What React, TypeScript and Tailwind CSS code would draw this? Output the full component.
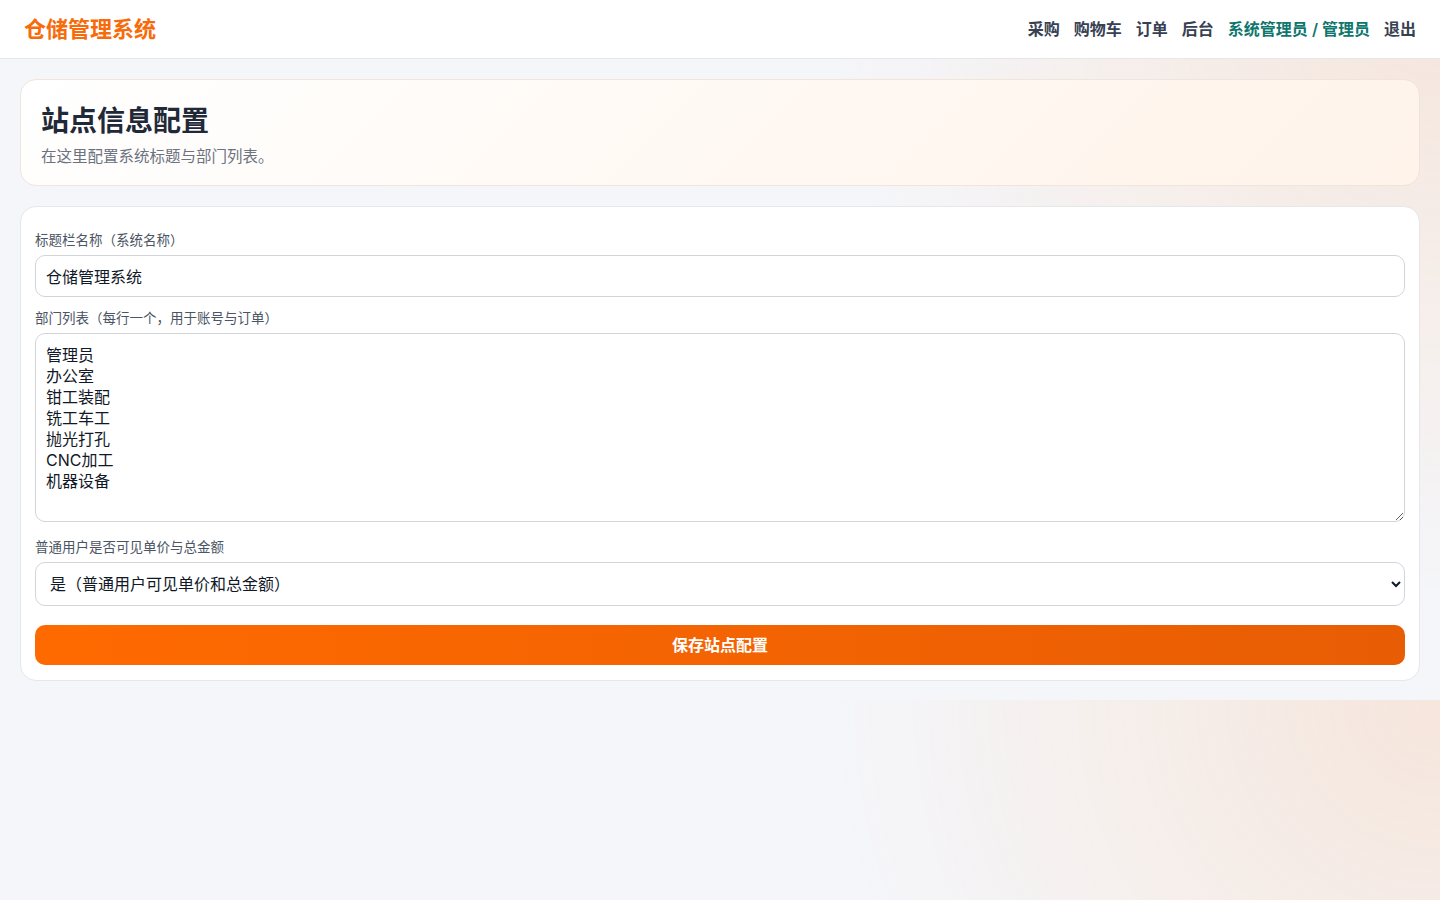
import React from 'react';

const departments = ['管理员', '办公室', '钳工装配', '铣工车工', '抛光打孔', 'CNC加工', '机器设备'];

const navLinks = ['采购', '购物车', '订单', '后台'];

const App: React.FC = () => {
  return (
    <div
      className="min-h-screen bg-[#f5f6fa] bg-[radial-gradient(circle_at_100%_0%,rgba(251,146,60,0.16),rgba(251,146,60,0)_38%)] bg-[length:100%_700px] bg-repeat-y font-['Inter','Noto_Sans_CJK_SC',sans-serif] text-[#111827]"
    >
      <header className="h-[59px] bg-white border-b border-[#e5e7eb] flex items-center justify-between px-6">
        <h1 className="text-[22px] font-bold text-[#f76b0b]">仓储管理系统</h1>
        <nav className="flex items-center gap-[14px] text-[16px] font-semibold text-[#374151]">
          {navLinks.map((l) => (
            <a key={l} href="#" className="hover:text-[#f76b0b]">
              {l}
            </a>
          ))}
          <span className="text-[#0f766e]">系统管理员 / 管理员</span>
          <a href="#" className="hover:text-[#f76b0b]">退出</a>
        </nav>
      </header>

      <main className="p-5 flex flex-col gap-5">
        <section className="rounded-2xl border border-[#f1e4da] bg-[linear-gradient(135deg,#ffffff_0%,#fff8f2_55%,#fff3ea_100%)] px-5 pt-[22px] pb-[17px]">
          <h2 className="text-[28px] leading-[38px] font-bold text-[#1f2937]">站点信息配置</h2>
          <p className="mt-[6px] text-[15.5px] leading-[22px] text-[#6b7280]">在这里配置系统标题与部门列表。</p>
        </section>

        <section className="rounded-2xl border border-[#e5e7eb] bg-white px-[14px] pt-6 pb-[15px]">
          <label className="block text-[13.5px] leading-[18px] text-[#4b5563] mb-[6px]">标题栏名称（系统名称）</label>
          <input
            defaultValue="仓储管理系统"
            className="block w-full h-[42px] rounded-[10px] border border-[#d1d5db] bg-white px-[10px] text-[16px] text-[#111827] outline-none"
          />

          <label className="block mt-3 text-[13.5px] leading-[18px] text-[#4b5563] mb-[6px]">部门列表（每行一个，用于账号与订单）</label>
          <textarea
            defaultValue={departments.join('\n')}
            className="block w-full h-[189px] rounded-[10px] border border-[#d1d5db] bg-white px-[10px] pt-[11px] pb-[10px] text-[16px] leading-[21px] text-[#111827] outline-none"
          />

          <label className="block mt-4 text-[13.5px] leading-[18px] text-[#4b5563] mb-[6px]">普通用户是否可见单价与总金额</label>
          <select
            defaultValue="yes"
            className="block w-full h-[44px] rounded-[10px] border border-[#d1d5db] bg-white px-[10px] text-[16px] text-[#111827] outline-none"
          >
            <option value="yes">是（普通用户可见单价和总金额）</option>
            <option value="no">否（普通用户不可见单价和总金额）</option>
          </select>

          <button
            type="button"
            className="mt-[19px] w-full h-10 rounded-[10px] bg-[linear-gradient(90deg,#ff6a00,#e85d04)] text-[16px] font-bold text-white"
          >
            保存站点配置
          </button>
        </section>
      </main>
    </div>
  );
};

export default App;
